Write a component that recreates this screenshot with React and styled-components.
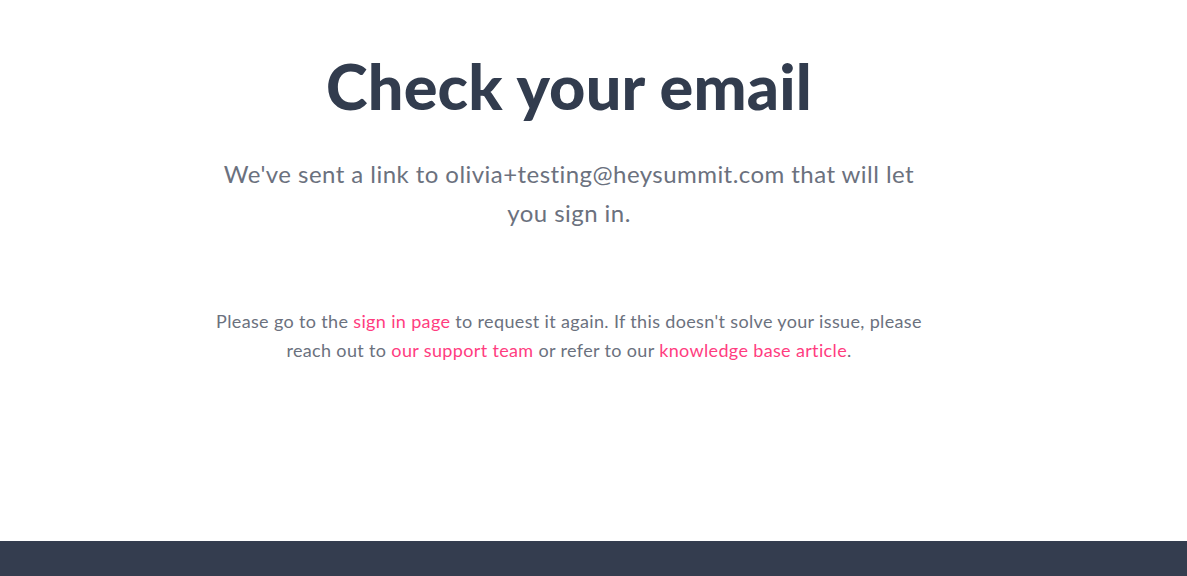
import React from 'react';
import styled, { createGlobalStyle } from 'styled-components';

const GlobalStyle = createGlobalStyle`
  html, body {
    margin: 0;
    padding: 0;
    background: #fff;
  }
  body {
    font-family: Lato, "Noto Sans", "Liberation Sans", sans-serif;
    -webkit-font-smoothing: antialiased;
  }
`;

const Page = styled.div`
  display: flex;
  flex-direction: column;
  min-height: 100vh;
`;

const Main = styled.main`
  height: 541px;
  box-sizing: border-box;
  padding: 46px 49px 0 0;
  display: flex;
  justify-content: center;
`;

const Column = styled.div`
  width: 720px;
  display: flex;
  flex-direction: column;
  align-items: center;
  text-align: center;
`;

const Title = styled.h1`
  margin: 0;
  font-size: 63px;
  line-height: 80px;
  font-weight: 900;
  color: #323c4e;
  letter-spacing: 0.2px;
`;

const Lead = styled.p`
  margin: 28px 0 0;
  max-width: 700px;
  font-size: 24px;
  line-height: 39px;
  letter-spacing: 0.45px;
  color: #6b717e;
`;

const Note = styled.p`
  margin: 75px 0 0;
  max-width: 712px;
  font-size: 18px;
  line-height: 29px;
  letter-spacing: 0.35px;
  color: #6b717e;
`;

const Link = styled.a`
  color: #ff3d7f;
  text-decoration: none;
`;

const Footer = styled.footer`
  flex: 1;
  background: #343d4f;
  min-height: 35px;
`;

export default function App() {
  return (
    <Page>
      <GlobalStyle />
      <Main>
        <Column>
          <Title>Check your email</Title>
          <Lead>
            We've sent a link to olivia+testing@heysummit.com that will let you sign in.
          </Lead>
          <Note>
            Please go to the <Link href="#">sign in page</Link> to request it again. If this
            doesn't solve your issue, please reach out to <Link href="#">our support team</Link> or
            refer to our <Link href="#">knowledge base article</Link>.
          </Note>
        </Column>
      </Main>
      <Footer />
    </Page>
  );
}
